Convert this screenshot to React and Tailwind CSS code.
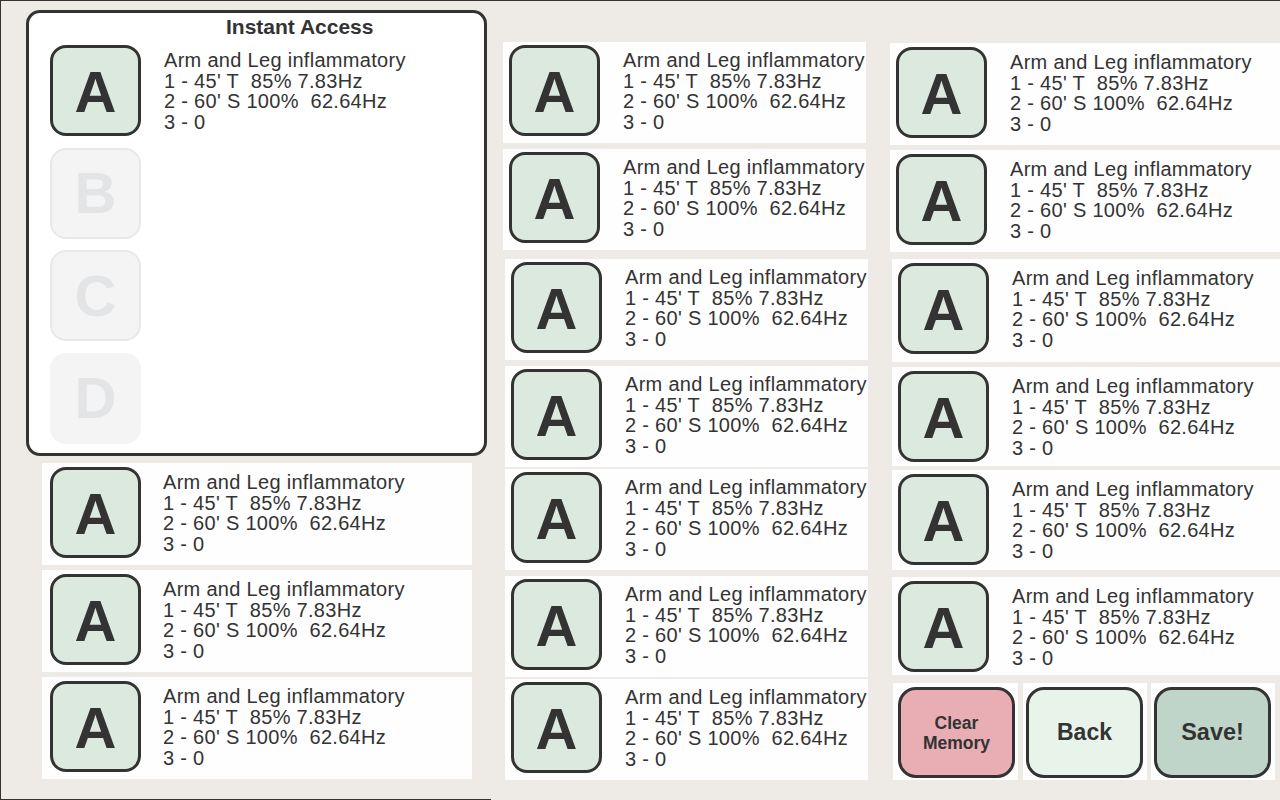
import React from 'react';

const FONT = "font-['Liberation_Sans',Arial,sans-serif]";

const Lines = ({ className = '' }) => (
    <div className={`text-[20px] leading-[20.5px] tracking-[0.3px] text-[#333] whitespace-nowrap ${className}`}>
        <div>Arm and Leg inflammatory</div>
        <div>1 - 45' T&nbsp; 85% 7.83Hz</div>
        <div>2 - 60' S 100%&nbsp; 62.64Hz</div>
        <div>3 - 0</div>
    </div>
);

const Key = ({ letter = 'A', faded = false, noBorder = false }) => {
    if (faded) {
        return (
            <div className={`w-[91px] h-[91px] shrink-0 rounded-[16px] bg-[#f4f4f4] flex items-center justify-center ${noBorder ? '' : 'border-2 border-[#e8e8e8]'}`}>
                <span className="text-[58px] font-bold leading-none text-[#e3e4e6]">{letter}</span>
            </div>
        );
    }
    return (
        <div className="w-[91px] h-[91px] shrink-0 rounded-[16px] bg-[#dce9df] border-[3px] border-[#333] flex items-center justify-center">
            <span className="text-[58px] font-bold leading-none text-[#333] pt-[2px]">{letter}</span>
        </div>
    );
};

// one memory slot: key on the left, program lines on the right
const Slot = ({ className, pad, gap = 'ml-[23px]' }) => (
    <div className={`bg-[#fefefe] ${className}`}>
        <div className={`flex items-start ${pad}`}>
            <Key />
            <Lines className={`${gap} mt-[5px]`} />
        </div>
    </div>
);

const col2 = [
    'mt-[41px] ml-[12px] h-[101px]',
    'mt-[6px] ml-[12px] h-[101px]',
    'mt-[9px] ml-[14px] h-[101px]',
    'mt-[6px] ml-[14px] h-[101px]',
    'mt-[2px] ml-[14px] h-[101px]',
    'mt-[6px] ml-[14px] h-[101px]',
    'mt-[2px] ml-[14px] h-[101px]',
];

const col3 = [
    'mt-[42px] ml-0 h-[102px]',
    'mt-[5px] ml-0 h-[102px]',
    'mt-[7px] ml-[2px] h-[103px]',
    'mt-[5px] ml-[2px] h-[99px]',
    'mt-[4px] ml-[2px] h-[100px]',
    'mt-[7px] ml-[2px] h-[98px]',
];

const App = () => {
    return (
        <div className={`w-[1280px] h-[800px] overflow-hidden flex bg-[#eeebe6] border-t border-l border-[#333] ${FONT}`}>
            {/* left column */}
            <div className="w-[490px] h-full shrink-0 border-b border-[#333] flex flex-col">
                <div className="mt-[9px] ml-[25px] w-[461px] h-[446px] shrink-0 border-[3px] border-[#333] rounded-[14px] bg-white">
                    <div className="pl-[197px] pt-[2px] text-[21px] leading-[24px] font-bold text-[#333]">Instant Access</div>
                    <div className="mt-[6px] ml-[21px] flex flex-col gap-[11.5px]">
                        <div className="flex items-start">
                            <Key />
                            <Lines className="ml-[23px] mt-[5px]" />
                        </div>
                        <Key letter="B" faded />
                        <Key letter="C" faded />
                        <Key letter="D" faded noBorder />
                    </div>
                </div>
                <div className="mt-[7px] ml-[41px] w-[430px] flex flex-col gap-[5px]">
                    {[0, 1, 2].map(i => (
                        <Slot key={i} className="h-[102px]" pad="pl-[8px] pt-[4px]" gap="ml-[22px]" />
                    ))}
                </div>
            </div>

            {/* middle column */}
            <div className="w-[399px] shrink-0 flex flex-col">
                {col2.map((c, i) => (
                    <Slot key={i} className={`w-[363px] ${c}`} pad="pl-[6px] pt-[3px]" />
                ))}
            </div>

            {/* right column */}
            <div className="flex-1 flex flex-col">
                {col3.map((c, i) => (
                    <Slot key={i} className={c} pad="pl-[6px] pt-[4px]" />
                ))}
                <div className="mt-[8px] ml-[3px] flex gap-[5px] h-[97px]">
                    <div className="w-[125px] bg-[#fefefe] pl-[5px] pt-[4px]">
                        <button className="w-[117px] h-[91px] rounded-[18px] bg-[#e8aeb3] border-[3px] border-[#333] flex flex-col items-center justify-center text-[17.5px] leading-[20px] font-bold text-[#333]">
                            <span>Clear</span>
                            <span>Memory</span>
                        </button>
                    </div>
                    <div className="w-[124px] bg-[#fefefe] pl-[3px] pt-[4px]">
                        <button className="w-[117px] h-[91px] rounded-[18px] bg-[#e8f3ea] border-[3px] border-[#333] flex items-center justify-center text-[23px] font-bold text-[#333]">Back</button>
                    </div>
                    <div className="w-[124px] bg-[#fefefe] pl-[3px] pt-[4px] -ml-[1px]">
                        <button className="w-[117px] h-[91px] rounded-[18px] bg-[#c0d5c9] border-[3px] border-[#333] flex items-center justify-center text-[23.5px] font-bold text-[#333]">Save!</button>
                    </div>
                </div>
            </div>
        </div>
    );
};

export default App;
